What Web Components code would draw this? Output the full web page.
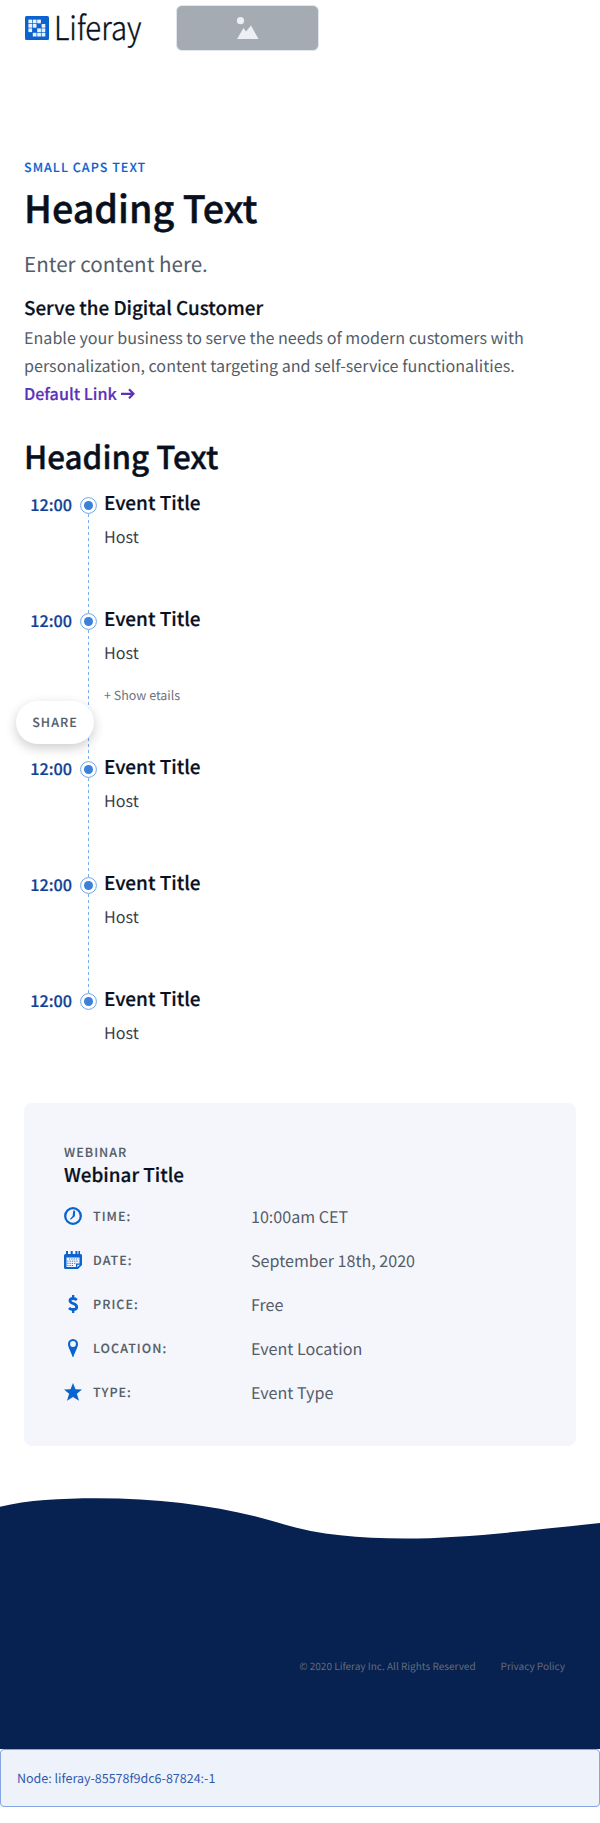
<!DOCTYPE html>
<html lang="en">
<head>
<meta charset="utf-8">
<title>Liferay Event</title>
<style>
html,body{margin:0;background:#fff}
body{font-family:"Noto Sans CJK SC","Noto Sans",sans-serif;width:600px;position:relative;color:#09101d;text-rendering:geometricPrecision}
</style>
</head>
<body>
<site-header></site-header>
<hero-section>
  <span slot="eyebrow">SMALL CAPS TEXT</span>
  <span slot="title">Heading Text</span>
  <span slot="lead">Enter content here.</span>
</hero-section>
<info-blurb>
  <span slot="title">Serve the Digital Customer</span>
  Enable your business to serve the needs of modern customers with personalization, content targeting and self-service functionalities.
  <span slot="link">Default Link</span>
</info-blurb>
<event-timeline>
  <span slot="title">Heading Text</span>
  <timeline-event time="12:00" host="Host">Event Title</timeline-event>
  <timeline-event time="12:00" host="Host" more="+ Show etails">Event Title</timeline-event>
  <timeline-event time="12:00" host="Host">Event Title</timeline-event>
  <timeline-event time="12:00" host="Host">Event Title</timeline-event>
  <timeline-event time="12:00" host="Host" last>Event Title</timeline-event>
</event-timeline>
<webinar-card>
  <span slot="kind">WEBINAR</span>
  <span slot="title">Webinar Title</span>
  <detail-row icon="time" label="TIME:">10:00am CET</detail-row>
  <detail-row icon="date" label="DATE:">September 18th, 2020</detail-row>
  <detail-row icon="price" label="PRICE:">Free</detail-row>
  <detail-row icon="location" label="LOCATION:">Event Location</detail-row>
  <detail-row icon="type" label="TYPE:">Event Type</detail-row>
</webinar-card>
<site-footer>
  <span slot="legal">© 2020 Liferay Inc. All Rights Reserved</span>
  <span slot="privacy">Privacy Policy</span>
</site-footer>
<node-alert>Node: liferay-85578f9dc6-87824:-1</node-alert>
<share-button>SHARE</share-button>
<script>
function define(name, render) {
  customElements.define(name, class extends HTMLElement {
    constructor() {
      super();
      this.attachShadow({mode: 'open'});
    }
    connectedCallback() { this.shadowRoot.innerHTML = render(this); }
  });
}

const icons = {
  time: '<circle cx="9" cy="9" r="7.8" fill="none" stroke="#0b63ce" stroke-width="2.3"/><path d="M9.3 3.4L11.2 3.800L10.900 9.3L6.7 12.8L6 12L8.6 9Z" fill="#0b63ce"/>',
  date: '<path fill="#0b63ce" d="M2 0h2v3h2.700v-3h2v3h2.700v-3h2v3h1v-3h1.600v3h.5q1.500 0 1.500 1.500V14L14 18H1.500Q0 18 0 16.500V4.500Q0 3 1.500 3H2Z"/><path fill="#f4f6fb" d="M2.500 6.500h13v6h-3.500v3.500H2.500Z"/><path stroke="#0b63ce" stroke-width=".8" stroke-dasharray="1.300 1" d="M5 8h9.500M3.200 10.200h11.500M3.200 12.400h8.500M3.200 14.500h6"/><path fill="#f4f6fb" d="M13.300 16.300v-2.600h2.600Z"/>',
  price: '<path d="M12.800 4.900Q11.300 3.500 9.100 3.500Q6 3.500 6 5.800Q6 7.400 9.200 8.500Q12.700 9.700 12.700 11.900Q12.700 14.500 9.200 14.500Q6.700 14.500 5 12.900" fill="none" stroke="#0b63ce" stroke-width="2.800"/><path d="M8 0h2.300v3H8ZM8 14.500h2.300V18H8Z" fill="#0b63ce"/>',
  location: '<path fill="#0b63ce" fill-rule="evenodd" d="M9 0a5 5 0 0 1 5 5.200C14 8 11 12.700 9.400 18H8.600C7 12.700 4 8 4 5.200A5 5 0 0 1 9 0ZM9 2.100a2.900 2.900 0 1 0 0 5.800a2.900 2.900 0 1 0 0-5.800Z"/>',
  type: '<path fill="#0b63ce" d="M9 0L11.500 6.200L18 6.600L12.900 10.800L15 17.800L9 14L3 17.800L5.100 10.800L0 6.600L6.500 6.200Z"/>'
};

/* Pixel mosaic of the brand mark: one string per row, 1 is a light tile */
const mosaic = ['1110', '1101', '1011', '0111'].flatMap((row, r) =>
  [...row].map((v, c) => v === '1' ? `<rect x="${3.4 + c * 4.4}" y="${3.6 + r * 4.4}" width="3.700" height="3.700"/>` : '')).join('');

define('site-header', () => `
<style>
:host{display:flex;height:56px;padding:0 0 0 25px;align-items:flex-start}
.mark{margin-top:16px;flex:none}
.word{margin-left:5px;flex:none;overflow:visible}
.ph{margin-left:32px;margin-top:5px;box-sizing:border-box;width:143px;height:46px;background:#a4abb3;border:1px solid #e0e6eb;border-radius:6px;flex:none}
.ph svg{display:block}
</style>
<svg class="mark" width="24" height="24" viewBox="0 0 24 24"><rect width="24" height="24" rx="1.500" fill="#0b63ce"/><g fill="#e9f1fc">${mosaic}</g></svg>
<svg class="word" width="90" height="56" viewBox="0 0 90 56"><text x="0" y="40" font-family="Noto Sans CJK SC" font-weight="300" font-size="33" textLength="87.500" lengthAdjust="spacingAndGlyphs" fill="#09101d" stroke="#09101d" stroke-width=".4">Liferay</text></svg>
<div class="ph"><svg width="141" height="44" viewBox="0 0 141 44" fill="#eceff5"><circle cx="63.500" cy="14.700" r="3.600"/><path d="M60 33L66.500 22L69 25.500L74 19.500L81.500 33Z"/></svg></div>`);

define('hero-section', () => `
<style>
:host{display:block;padding:101px 24px 0}
.e{font-size:12.500px;line-height:20px;font-weight:500;-webkit-text-stroke:.12px;letter-spacing:1.040px;color:#0b63ce}
h1{margin:4px 0 0;font-size:37.700px;line-height:52px;font-weight:500;-webkit-text-stroke:.45px}
p{margin:12px 0 0;font-size:20.600px;line-height:36px;color:#545d69}
</style>
<div class="e"><slot name="eyebrow"></slot></div><h1><slot name="title"></slot></h1><p><slot name="lead"></slot></p>`);

define('info-blurb', () => `
<style>
:host{display:block;padding:13px 24px 0}
h3{margin:0;font-size:18.850px;line-height:28px;font-weight:500;-webkit-text-stroke:.22px}
p{margin:1px 0 0;font-size:16.120px;line-height:28px;color:#545d69}
.l{display:flex;align-items:center;gap:4px;font-size:16.150px;line-height:28px;font-weight:500;-webkit-text-stroke:.2px;color:#5c33b8}
</style>
<h3><slot name="title"></slot></h3><p><slot></slot></p>
<div class="l"><slot name="link"></slot><svg width="14" height="12" viewBox="0 0 14 12" fill="none" stroke="#5c33b8" stroke-width="2.200"><path d="M0 6.800H12.500M8 2.300L12.500 6.800L8 11.300"/></svg></div>`);

define('event-timeline', () => `
<style>
:host{display:block;padding:28px 24px 0}
h2{margin:0 0 9px;font-size:31.400px;line-height:44px;font-weight:500;-webkit-text-stroke:.4px}
</style>
<h2><slot name="title"></slot></h2><slot></slot>`);

define('timeline-event', el => `
<style>
:host{display:grid;grid-template-columns:48px 17px 1fr;column-gap:8px;height:${el.hasAttribute('more') ? 148 : 116}px}
.t{margin-top:2px;font-size:16.200px;line-height:28px;font-weight:500;-webkit-text-stroke:.2px;color:#134194;text-align:right}
.r{display:flex;flex-direction:column;align-items:center;padding-top:9px}
.r svg{display:block;flex:none}
.d{flex:1;width:1px;margin-bottom:-9px;background:repeating-linear-gradient(#7fade8 0 3px,transparent 3px 6px)}
.b{margin-left:-1px}
.n{margin-top:1px;font-size:18.950px;line-height:28px;font-weight:500;-webkit-text-stroke:.22px}
.h{margin-top:5px;font-size:16.100px;line-height:28px;color:#393f4d}
.m{margin-top:19px;font-size:12.500px;line-height:20px;color:#6b7280}
</style>
<div class="t">${el.getAttribute('time')}</div>
<div class="r"><svg width="17" height="17" viewBox="0 0 17 17"><circle cx="8.500" cy="8.500" r="7.900" fill="#fff" stroke="#6fa3e6"/><circle cx="8.500" cy="8.500" r="4.500" fill="#3b80db"/></svg>${el.hasAttribute('last') ? '' : '<div class="d"></div>'}</div>
<div class="b"><div class="n"><slot></slot></div><div class="h">${el.getAttribute('host')}</div>${el.hasAttribute('more') ? `<div class="m">${el.getAttribute('more')}</div>` : ''}</div>`);

define('webinar-card', () => `
<style>
:host{display:block;box-sizing:border-box;margin:3px 24px 0;height:343px;padding:39px 40px 0;background:#f4f6fb;border-radius:8px}
.k{font-size:12.500px;line-height:20px;font-weight:500;-webkit-text-stroke:.12px;letter-spacing:1.040px;color:#545d69}
h3{margin:-1px 0 10px;font-size:18.850px;line-height:28px;font-weight:500;-webkit-text-stroke:.22px}
</style>
<div class="k"><slot name="kind"></slot></div><h3><slot name="title"></slot></h3><slot></slot>`);

define('detail-row', el => `
<style>
:host{display:grid;grid-template-columns:18px 147px 1fr;column-gap:11px;height:44px;align-items:start;color:#545d69}
svg{display:block;margin-top:8px}
.l{margin-top:7px;font-size:12.500px;line-height:20px;font-weight:500;-webkit-text-stroke:.12px;letter-spacing:1.040px}
.v{margin-top:3px;font-size:16.100px;line-height:28px}
</style>
<svg width="18" height="18" viewBox="0 0 18 18">${icons[el.getAttribute('icon')]}</svg><div class="l">${el.getAttribute('label')}</div><div class="v"><slot></slot></div>`);

define('site-footer', () => `
<style>
:host{display:block;padding-top:51px}
svg{display:block}
.f{height:199px;background:#072150;display:flex;justify-content:flex-end;gap:25px;box-sizing:border-box;padding:107px 35px 0 0;font-size:10.020px;line-height:18px;color:#646c78}
</style>
<svg width="600" height="53" viewBox="0 0 600 53"><path fill="#072150" d="M0 9.700C28 3 60 1.200 97 1.200C165 1.200 225 10 276 25C315 37.500 356 41.500 405 41.500C465 41.500 537 32.500 600 26V53H0Z"/></svg>
<div class="f"><slot name="legal"></slot><slot name="privacy"></slot></div>`);

define('node-alert', () => `
<style>
:host{display:block;box-sizing:border-box;height:58px;margin-bottom:16px;border:1px solid #84a5e6;border-radius:4px;background:#eef2fa;padding:18px 16px;font-size:12.500px;line-height:20px;color:#2e5aac}
</style><slot></slot>`);

define('share-button', () => `
<style>
:host{position:absolute;left:16px;top:701px;width:78px;height:43px;border-radius:22px;background:#fff;box-shadow:0 4px 12px rgba(0,0,0,.2);display:flex;align-items:center;justify-content:center;box-sizing:border-box;padding-bottom:2px;font-size:12.500px;line-height:20px;font-weight:500;-webkit-text-stroke:.12px;letter-spacing:1.040px;color:#545d69}
</style><slot></slot>`);
</script>
</body>
</html>
